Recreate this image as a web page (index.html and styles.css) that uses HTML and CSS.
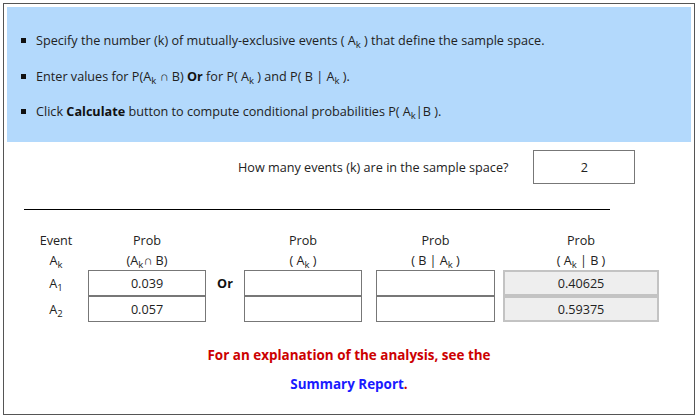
FILE: index.html
```html
<!DOCTYPE html>
<html>
<head>
<meta charset="utf-8">
<link rel="stylesheet" href="styles.css">
</head>
<body>
<div class="frame">
  <div class="info">
    <ul class="steps">
      <li>Specify the number (k) of mutually-exclusive events ( A<sub>k</sub> ) that define the sample space.</li>
      <li>Enter values for P(A<sub>k</sub> &cap; B) <b>Or</b> for P( A<sub>k</sub> ) and P( B | A<sub>k</sub> ).</li>
      <li>Click <b>Calculate</b> button to compute conditional probabilities P( A<sub>k</sub>|B ).</li>
    </ul>
  </div>

  <div class="question">
    <span class="q-text">How many events (k) are in the sample space?</span>
    <div class="box q-box">2</div>
  </div>

  <div class="rule"></div>

  <div class="table">
    <div class="hd">Event</div>
    <div class="hd">Prob</div>
    <div></div>
    <div class="hd">Prob</div>
    <div></div>
    <div class="hd">Prob</div>
    <div></div>
    <div class="hd">Prob</div>

    <div class="hd">A<sub>k</sub></div>
    <div class="hd">(A<sub>k</sub>&cap; B)</div>
    <div></div>
    <div class="hd">( A<sub>k</sub> )</div>
    <div></div>
    <div class="hd">( B | A<sub>k</sub> )</div>
    <div></div>
    <div class="hd">( A<sub>k</sub> | B )</div>

    <div class="lbl">A<sub class="num">1</sub></div>
    <div class="box cell">0.039</div>
    <div class="or">Or</div>
    <div class="box cell"></div>
    <div></div>
    <div class="box cell"></div>
    <div></div>
    <div class="box cell out">0.40625</div>

    <div class="lbl">A<sub class="num">2</sub></div>
    <div class="box cell">0.057</div>
    <div></div>
    <div class="box cell"></div>
    <div></div>
    <div class="box cell"></div>
    <div></div>
    <div class="box cell out">0.59375</div>
  </div>

  <p class="note">For an explanation of the analysis, see the</p>
  <p class="note"><a class="report" href="#">Summary Report</a>.</p>
</div>
</body>
</html>
```

FILE: styles.css
```css
html, body {
  margin: 0;
  padding: 0;
  background: #ffffff;
}

body {
  font-family: "Open Sans", "Noto Sans", sans-serif;
  font-size: 12.65px;
  color: #222222;
}

.frame {
  margin: 3px;
  width: 692px;
  height: 412px;
  box-sizing: border-box;
  border: 1px solid #555555;
  padding: 3px;
}

.info {
  background: #b3d9fc;
  height: 135px;
  box-sizing: border-box;
  padding: 24px 0 0 14px;
}

.steps {
  list-style: none;
  margin: 0;
  padding: 0;
  display: flex;
  flex-direction: column;
  gap: 17.5px;
}

.steps li {
  line-height: 18px;
  height: 18px;
}

.steps li::before {
  content: "";
  display: inline-block;
  width: 5px;
  height: 5px;
  background: #111111;
  margin-right: 10px;
  vertical-align: 2px;
}

sub {
  font-size: 9.5px;
  vertical-align: -3px;
  line-height: 0;
}

b {
  font-weight: 700;
  color: #111111;
}

.question {
  display: flex;
  align-items: center;
  margin-top: 8px;
  padding-left: 231px;
  gap: 25px;
}

.box {
  box-sizing: border-box;
  border: 1px solid #777777;
  background: #ffffff;
  display: flex;
  align-items: center;
  justify-content: center;
}

.q-box {
  width: 102px;
  height: 34px;
}

.rule {
  margin: 25px 0 0 17px;
  width: 586px;
  height: 1px;
  background: #000000;
}

.table {
  display: grid;
  grid-template-columns: 64px 118px 38px 118px 14px 119px 8px 156px;
  grid-template-rows: 20px 20px 26px 26px;
  margin: 20px 0 0 17px;
}

.hd {
  text-align: center;
  line-height: 20px;
}

.lbl {
  text-align: center;
  line-height: 26px;
}

.or {
  font-weight: 700;
  color: #111111;
  text-align: center;
  line-height: 26px;
}

.cell {
  height: 26px;
}

.out {
  background: #eeeeee;
  border: 2px solid #c3c3c3;
}

.note {
  margin: 0;
  text-align: center;
  font-weight: 700;
  color: #cc0000;
  font-size: 13.45px;
  line-height: 20px;
}

.note:first-of-type {
  margin-top: 23px;
}

.note + .note {
  margin-top: 9px;
}

.report {
  color: #1a1aff;
  text-decoration: none;
}
```
